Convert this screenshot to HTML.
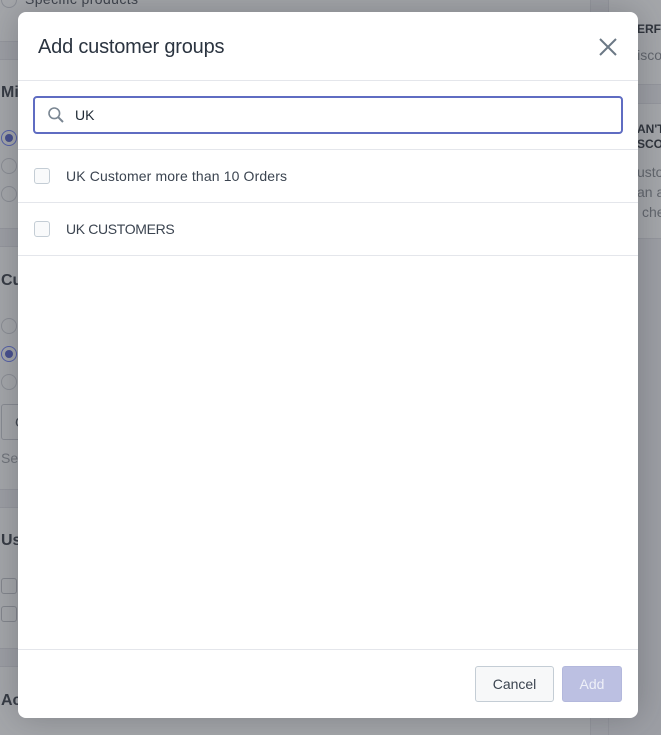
<!DOCTYPE html>
<html><head><meta charset="utf-8">
<style>
html,body{margin:0;padding:0}
body{width:661px;height:735px;overflow:hidden;position:relative;font-family:"Liberation Sans",sans-serif;color:#212b36;background:#a5a7ab}
.a{position:absolute;white-space:nowrap}
.wrap{position:absolute;left:0;top:0;width:661px;height:735px;filter:blur(.35px)}
.band{position:absolute;background:#9d9fa5;border:1px solid #95979e;border-width:1px 0;box-sizing:border-box}
.t{color:#3f444d;font-size:14px}
.h{color:#363b44;font-size:16px;font-weight:bold}
.r{position:absolute;left:1px;width:16px;height:16px;border-radius:50%;border:1px solid #8b8e95;box-sizing:border-box}
.c{position:absolute;left:1px;width:16px;height:16px;border-radius:3px;border:1px solid #83868d;box-sizing:border-box}
.modal{position:absolute;left:18px;top:12px;width:620px;height:706px;background:#fff;border-radius:8px;overflow:hidden}
.shadow{position:absolute;left:18px;top:12px;width:620px;height:706px;border-radius:8px;box-shadow:0 0 34px rgba(40,42,50,.3)}
.m{position:absolute;left:0;width:620px;height:1px;background:#e4e6eb}
.cb{position:absolute;left:16px;width:16px;height:16px;border:1px solid #c4cdd5;border-radius:3px;background:#f9fafb;box-sizing:border-box}
.row{position:absolute;left:48px;font-size:14px;color:#3b4450;white-space:nowrap}
</style></head><body>
<div class="wrap">
<div class="band" style="left:0;top:41px;width:590px;height:19px"></div>
<div class="band" style="left:0;top:228px;width:590px;height:19px"></div>
<div class="band" style="left:0;top:489px;width:590px;height:19px"></div>
<div class="band" style="left:0;top:648px;width:590px;height:19px"></div>
<div class="band" style="left:590px;top:0;width:19px;height:735px;border-width:0 1px"></div>
<div class="band" style="left:609px;top:84px;width:52px;height:20px"></div>
<div class="band" style="left:609px;top:238px;width:52px;height:497px;border-width:1px 0 0"></div>

<div class="a t" style="left:25px;top:-9px;letter-spacing:.4px">Specific products</div>
<div class="r" style="top:-8px"></div>
<div class="a h" style="left:1px;top:84px">Mi</div>
<div class="r" style="top:130px;border-color:#5560a8"></div>
<div class="a" style="left:5px;top:134px;width:8px;height:8px;border-radius:50%;background:#47508f"></div>
<div class="r" style="top:158px"></div>
<div class="r" style="top:186px"></div>
<div class="a h" style="left:1px;top:272px">Cu</div>
<div class="r" style="top:318px"></div>
<div class="r" style="top:346px;border-color:#5560a8"></div>
<div class="a" style="left:5px;top:350px;width:8px;height:8px;border-radius:50%;background:#47508f"></div>
<div class="r" style="top:374px"></div>
<div class="a" style="left:1px;top:404px;width:30px;height:36px;border:1px solid #888b92;box-sizing:border-box;border-radius:3px"></div>
<div class="a t" style="left:15px;top:414px">C</div>
<div class="a t" style="left:1px;top:450px;color:#70747b">Se</div>
<div class="a h" style="left:1px;top:532px">Us</div>
<div class="c" style="top:578px"></div>
<div class="c" style="top:606px"></div>
<div class="a h" style="left:1px;top:692px">Ac</div>

<div class="a" style="left:637px;top:22px;font-size:12px;font-weight:bold;color:#2f343c">ERF</div>
<div class="a t" style="left:627px;top:47px;color:#62666d">Disco</div>
<div class="a" style="left:637px;top:122px;font-size:12px;font-weight:bold;color:#2f343c">AN'T</div>
<div class="a" style="left:637px;top:137px;font-size:12px;font-weight:bold;color:#2f343c">SCO</div>
<div class="a t" style="left:637px;top:164px;color:#62666d">usto</div>
<div class="a t" style="left:637px;top:184px;color:#62666d">an a</div>
<div class="a t" style="left:642px;top:204px;color:#62666d">che</div>
</div>
<div class="shadow"></div>
<div class="modal">
  <div class="a" style="left:20px;top:24px;font-size:20px;color:#2b3440;letter-spacing:-.2px">Add customer groups</div>
  <svg class="a" style="left:581px;top:26px" width="18" height="18" viewBox="0 0 18 18"><path d="M1 1L17 17M17 1L1 17" stroke="#6b7885" stroke-width="2" fill="none"/></svg>
  <div class="m" style="top:68px"></div>
  <div class="a" style="left:15px;top:84px;width:590px;height:38px;border:2px solid #5f6cc2;border-radius:4px;box-sizing:border-box"></div>
  <svg class="a" style="left:29px;top:94px" width="18" height="18" viewBox="0 0 18 18"><circle cx="7.3" cy="7.3" r="5.3" stroke="#7a8692" stroke-width="1.6" fill="none"/><path d="M11.3 11.3L16 16" stroke="#7a8692" stroke-width="2" fill="none"/></svg>
  <div class="a" style="left:57px;top:95px;font-size:14px;color:#212b36">UK</div>
  <div class="m" style="top:137px"></div>
  <div class="cb" style="top:156px"></div>
  <div class="row" style="top:156px;letter-spacing:.13px">UK Customer more than 10 Orders</div>
  <div class="m" style="top:190px"></div>
  <div class="cb" style="top:209px"></div>
  <div class="row" style="top:209px;letter-spacing:-.35px">UK CUSTOMERS</div>
  <div class="m" style="top:243px"></div>
  <div class="m" style="top:637px"></div>
  <div class="a" style="left:457px;top:654px;width:79px;height:36px;box-sizing:border-box;background:#f7f8f9;border:1px solid #c4cdd5;border-radius:3px;text-align:center;line-height:34px;font-size:14px;color:#3b4450">Cancel</div>
  <div class="a" style="left:544px;top:654px;width:60px;height:36px;box-sizing:border-box;background:#bcc0e2;border:1px solid #b3b8dc;border-radius:3px;text-align:center;line-height:34px;font-size:14px;color:#eef0f8">Add</div>
</div>
</body></html>
